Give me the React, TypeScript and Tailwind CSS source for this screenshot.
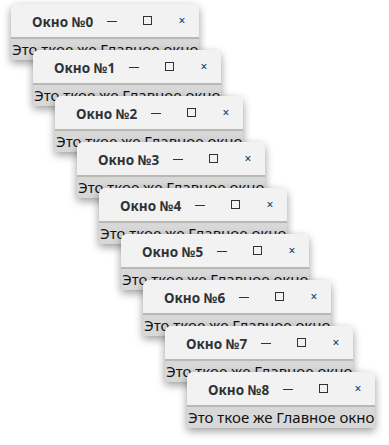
import React from "react";

const windows = [0, 1, 2, 3, 4, 5, 6, 7, 8];

// each window is a free-floating item on the desktop, cascaded by 22px / 46px
const offsets = [
  "left-[11px] top-[4px]",
  "left-[33px] top-[50px]",
  "left-[55px] top-[96px]",
  "left-[77px] top-[142px]",
  "left-[99px] top-[188px]",
  "left-[121px] top-[234px]",
  "left-[143px] top-[280px]",
  "left-[165px] top-[326px]",
  "left-[187px] top-[372px]",
];

function Win({ n }: { n: number }) {
  return (
    <div
      className={`absolute ${offsets[n]} w-[188px] rounded-t-[6px] shadow-[0_3px_9px_rgba(0,0,0,0.4)] font-['Noto_Sans',sans-serif]`}
    >
      {/* Title bar */}
      <div className="h-[35px] flex items-center rounded-t-[6px] bg-[#f2f2f2] border-b-2 border-[#b8b8b4] pl-[21px]">
        <span className="text-[13.5px] font-bold text-[#2e3436] pt-[3px] w-[68px]">
          Окно №{n}
        </span>
        <span className="w-[24px] flex justify-center pt-[1px]">
          <span className="block w-[10px] h-[1px] bg-[#2e3436]" />
        </span>
        <span className="w-[46px] flex justify-center">
          <span className="block w-[9px] h-[9px] border border-[#2e3436]" />
        </span>
        <span className="w-[24px] flex justify-center text-[12px] text-[#2e3436] pt-[1px]">
          ×
        </span>
      </div>
      {/* Content */}
      <div className="h-[21px] bg-[#d8d8d8] flex items-center pl-[1px] text-[15px] leading-none text-[#111] whitespace-nowrap overflow-hidden">
        Это ткое же Главное окно
      </div>
    </div>
  );
}

export default function App() {
  return (
    <div className="relative w-[389px] h-[445px] bg-white overflow-hidden">
      {windows.map((n) => (
        <Win key={n} n={n} />
      ))}
    </div>
  );
}
